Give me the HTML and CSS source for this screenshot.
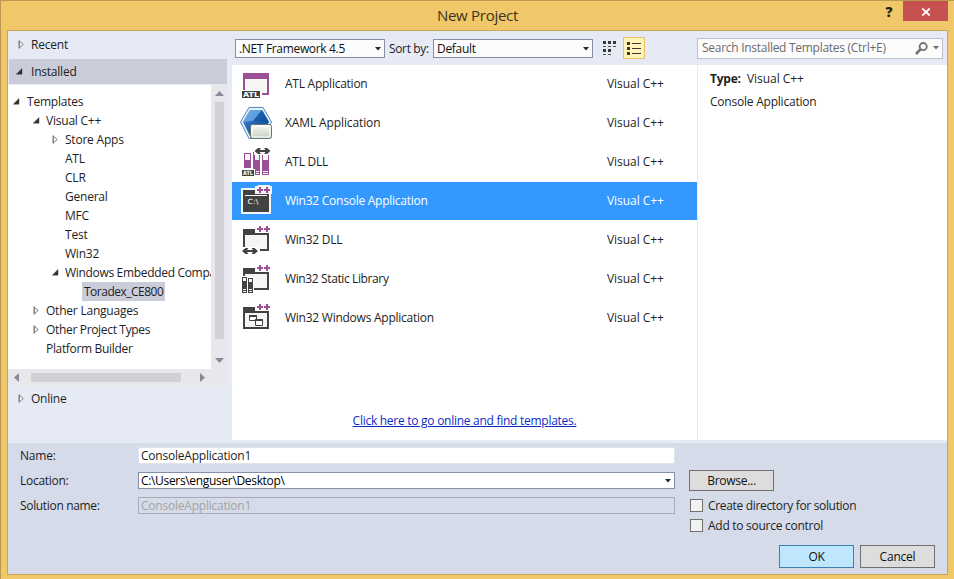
FILE: index.html
```
<!DOCTYPE html>
<html lang="en">
<head>
<meta charset="utf-8">
<title>New Project</title>
<link rel="stylesheet" href="styles.css">
</head>
<body>
<svg class="defs" width="0" height="0">
  <defs>
    <symbol id="closed" viewBox="0 0 7 9"><path d="M1 .8V8.2L5.2 4.5Z" fill="#fff" stroke="#777" stroke-width="1"/><path d="M1.5 0.5v8" stroke="#888"/></symbol>
    <symbol id="open" viewBox="0 0 7 7"><path d="M6 .5V6.200H.3Z" fill="#333" stroke="#333" stroke-width=".4"/></symbol>
    <symbol id="down" viewBox="0 0 6 4"><path d="M0 0H6L3 3.5Z" fill="currentColor"/></symbol>
    <g id="pp" fill="#9b4f96"><path d="M19 5h2v2h2v2h-2v2h-2V9h-2V7h2zM26 5h2v2h2v2h-2v2h-2V9h-2V7h2z"/></g>
    <g id="folder"><path d="M3 8H15V12H29V30H3Z" fill="#424242"/><path d="M5 14H27V28H5Z" fill="#f5f5f5"/></g>
    <path id="arrows" d="M0 3L3.500 0H6.500L5 2H11L9.500 0H12.500L16 3L12.500 6H9.500L11 4H5L6.500 6H3.500Z" fill="#424242"/>
    <linearGradient id="blue" x1="0" y1="0" x2="1" y2="1"><stop offset="0" stop-color="#4b91d9"/><stop offset=".5" stop-color="#1f61b5"/><stop offset="1" stop-color="#0d4187"/></linearGradient>
    <linearGradient id="grey" x1="0" y1="0" x2="0" y2="1"><stop offset="0" stop-color="#fbfcf8"/><stop offset=".5" stop-color="#dfe5da"/><stop offset="1" stop-color="#c5cdbf"/></linearGradient>
  </defs>
</svg>
<div class="window">
  <header class="titlebar">
    <span class="title">New Project</span>
    <div class="caption"><span class="help">?</span><button class="close" aria-label="Close"><svg width="10" height="8" viewBox="0 0 10 8"><path d="M1.300.5L8.700 7.500M8.700.5L1.300 7.500" stroke="#fff" stroke-width="1.800"/></svg></button></div>
  </header>
  <main class="client">
    <div class="upper">
      <nav class="side">
        <div class="group recent"><svg width="7" height="9"><use href="#closed"/></svg><span>Recent</span></div>
        <div class="group installed"><svg width="7" height="7"><use href="#open"/></svg><span>Installed</span></div>
        <div class="treebox">
          <ul class="tree">
            <li class="l0"><svg width="7" height="7"><use href="#open"/></svg><span>Templates</span></li>
            <li class="l1"><svg width="7" height="7"><use href="#open"/></svg><span>Visual C++</span></li>
            <li class="l2"><svg width="7" height="9"><use href="#closed"/></svg><span>Store Apps</span></li>
            <li class="l2"><i></i><span>ATL</span></li>
            <li class="l2"><i></i><span>CLR</span></li>
            <li class="l2"><i></i><span>General</span></li>
            <li class="l2"><i></i><span>MFC</span></li>
            <li class="l2"><i></i><span>Test</span></li>
            <li class="l2"><i></i><span>Win32</span></li>
            <li class="l2"><svg width="7" height="7"><use href="#open"/></svg><span class="embedded">Windows Embedded Compact</span></li>
            <li class="l3"><span class="current">Toradex_CE800</span></li>
            <li class="l1"><svg width="7" height="9"><use href="#closed"/></svg><span>Other Languages</span></li>
            <li class="l1"><svg width="7" height="9"><use href="#closed"/></svg><span class="tight">Other Project Types</span></li>
            <li class="l1"><i></i><span class="tight">Platform Builder</span></li>
          </ul>
          <div class="vscroll"><svg width="9" height="5"><path d="M0 5L4.500 0L9 5Z" fill="#868999"/></svg><div class="vthumb"></div><svg width="9" height="5"><path d="M0 0H9L4.500 5Z" fill="#868999"/></svg></div>
        </div>
        <div class="hscroll"><svg width="5" height="9"><path d="M5 0V9L0 4.500Z" fill="#868999"/></svg><div class="hthumb"></div><svg width="5" height="9"><path d="M0 0V9L5 4.500Z" fill="#868999"/></svg></div>
        <div class="group online"><svg width="7" height="9"><use href="#closed"/></svg><span>Online</span></div>
      </nav>
      <section class="content">
        <div class="toolbar">
          <div class="combo framework"><span>.NET Framework 4.5</span><svg width="6" height="4"><use href="#down"/></svg></div>
          <span class="sortlabel">Sort by:</span>
          <div class="combo sort"><span>Default</span><svg width="6" height="4"><use href="#down"/></svg></div>
          <svg class="grid-icon" width="14" height="14" fill="#383838"><path d="M0 0h3v3H0zM5 0h3v3H5zM10 0h3v3h-3zM0 8h3v3H0zM5 8h3v3H5z"/><path d="M0 5h3v1H0zM5 5h3v1H5zM10 5h3v1h-3zM0 13h3v1H0zM5 13h3v1H5z" opacity=".85"/></svg>
          <div class="listbtn"><svg width="14" height="13" fill="#383838"><path d="M0 0h3v3H0zM0 5h3v3H0zM0 10h3v3H0z"/><path d="M5 1h9v1H5zM5 6h9v1H5zM5 11h9v1H5z"/></svg></div>
          <div class="search"><span>Search Installed Templates (Ctrl+E)</span><svg class="lens" width="13" height="13" fill="none" stroke="#717171"><circle cx="8.200" cy="4.600" r="3.600" stroke-width="1.800"/><path d="M5.600 7.200L1 12" stroke-width="2.600"/></svg><svg class="mini" width="6" height="4"><use href="#down"/></svg></div>
        </div>
        <div class="panes">
          <div class="list">
            <div class="row"><svg width="34" height="38"><path d="M3 8H29V30H3Z" fill="#9b4f96"/><path d="M5 14H27V28H5Z" fill="#f5f5f5"/><path d="M1 25H22V34H1Z" fill="#fff"/><path d="M2 26H20V33H2Z" fill="#424242"/><text x="3" y="32.200" class="badge" textLength="16" lengthAdjust="spacingAndGlyphs">ATL</text></svg><span>ATL Application</span><em>Visual C++</em></div>
            <div class="row"><svg width="34" height="38"><path d="M9 3.500H23L31.500 18L23 34.500H9L.5 18Z" fill="#e6f0fb" stroke="#5485bb"/><path d="M10 6H22L29 18L22 32H10L3 18Z" fill="url(#blue)"/><path d="M10 6H22L13 17L3 18Z" fill="#7db9ef" opacity=".65"/><path d="M22 6L29 18L13 17Z" fill="#11529f" opacity=".6"/><rect x="10.500" y="20.500" width="21" height="14" rx="2" fill="url(#grey)" stroke="#65786f"/><rect x="12" y="22" width="18" height="11" rx="1" fill="none" stroke="#fff"/></svg><span class="xaml">XAML Application</span><em>Visual C++</em></div>
            <div class="row"><svg width="34" height="38"><path d="M4 10H11V25H4ZM13 9H20V32H13ZM22 10H29V32H22Z" fill="#9b4f96"/><path d="M5 11H10V17H5ZM14 12H19V17H14ZM23 12H28V17H23Z" fill="#f5f5f5"/><path d="M16 28H19V29H16ZM16 30H19V31H16ZM23 28H28V29H23ZM23 30H28V31H23Z" fill="#fff"/><path d="M14 3H31V12H14ZM1 26H15V34H1Z" fill="#fff"/><use href="#arrows" x="14.500" y="5"/><path d="M2 27H14V33H2Z" fill="#424242"/><text x="3" y="32" class="badge small" textLength="10" lengthAdjust="spacingAndGlyphs">ATL</text><path d="M14 12H15V17H14Z" fill="#9b4f96"/></svg><span>ATL DLL</span><em>Visual C++</em></div>
            <div class="row selected"><svg width="34" height="38"><path d="M1 6H15V4H18V3H30V4H32V12H31V32H1Z" fill="#f5f5f5"/><path d="M3 8H15V12H29V30H3Z" fill="#424242"/><path d="M5 13H27V14H5Z" fill="#f5f5f5"/><use href="#pp"/><text x="7.500" y="22.300" class="prompt" textLength="11" lengthAdjust="spacingAndGlyphs">C:\</text></svg><span>Win32 Console Application</span><em>Visual C++</em></div>
            <div class="row"><svg width="34" height="38"><use href="#folder"/><path d="M1 26H20V34H1Z" fill="#fff"/><use href="#arrows" x="2" y="27"/><use href="#pp"/></svg><span>Win32 DLL</span><em>Visual C++</em></div>
            <div class="row"><svg width="34" height="38"><use href="#folder"/><path d="M1 16H7V17H14V34H1Z" fill="#fff"/><path d="M2 17H7V33H2ZM8 18H13V33H8Z" fill="#424242"/><path d="M3 18H6V21H3ZM9 19H12V22H9ZM3 29H6V30H3ZM3 31H6V32H3ZM9 29H12V30H9ZM9 31H12V32H9Z" fill="#f5f5f5"/><use href="#pp"/></svg><span class="static">Win32 Static Library</span><em>Visual C++</em></div>
            <div class="row"><svg width="34" height="38"><use href="#folder"/><path d="M9.500 16.500H16.500V21.500H9.500Z" fill="#fff" stroke="#424242"/><path d="M9 16H17V18H9Z" fill="#424242"/><path d="M15.500 20.500H22.500V26.500H15.500Z" fill="#fff" stroke="#424242"/><path d="M15 20H23V22H15Z" fill="#424242"/><use href="#pp"/></svg><span>Win32 Windows Application</span><em>Visual C++</em></div>
            <a class="onlinelink">Click here to go online and find templates.</a>
          </div>
          <aside class="detail">
            <p class="type"><b>Type:</b><span>Visual C++</span></p>
            <p>Console Application</p>
          </aside>
        </div>
      </section>
    </div>
    <footer class="form">
      <div class="fields">
        <label class="f-name">Name:</label><div class="box name">ConsoleApplication1</div>
        <label class="f-loc">Location:</label><div class="box location"><span>C:\Users\enguser\Desktop\</span><svg width="6" height="4"><use href="#down"/></svg></div>
        <label class="f-sol">Solution name:</label><div class="box solution">ConsoleApplication1</div>
      </div>
      <div class="actions">
        <button class="btn browse">Browse...</button>
        <div class="check"><i></i><span class="c-create">Create directory for solution</span></div>
        <div class="check"><i></i><span class="c-add">Add to source control</span></div>
        <div class="confirm"><button class="btn ok">OK</button><button class="btn cancel">Cancel</button></div>
      </div>
    </footer>
  </main>
</div>
</body>
</html>
```
FILE: styles.css
```
* { box-sizing: border-box; }
body { margin: 0; font: 12px/19px "Open Sans", "Noto Sans", sans-serif; letter-spacing: -0.22px; color: #1e1e1e; }
.defs { position: absolute; }
svg { display: block; flex: none; }
button { font: inherit; letter-spacing: inherit; padding: 0; }
span, em, label, a { white-space: nowrap; }
.window { width: 954px; height: 579px; background: #f0c869; border: 1px solid #b9994f; border-right: 0; border-bottom: 0; padding: 0 6px 0; }
.titlebar { height: 29px; display: grid; grid-template-columns: 1fr; position: relative; }
.title { font-size: 15px; letter-spacing: -.28px; text-align: center; line-height: 28px; color: #3b3322; }
.caption { position: absolute; right: 0; top: 0; display: flex; }
.help { font-size: 14px; font-weight: 800; width: 28px; text-align: center; line-height: 21px; color: #222; }
.close { width: 45px; height: 20px; border: 0; background: #c75050; display: grid; place-items: center; padding-top: 2px; }
.client { width: 941px; height: 545px; border: 1px solid #c8a654; display: flex; flex-direction: column; }
.upper { height: 412px; background: #e6eaf5; display: flex; }
.side { width: 220px; display: flex; flex-direction: column; }
.group { display: flex; align-items: center; padding-left: 10px; }
.group svg { margin-right: 6px; }
.recent { height: 28px; padding-bottom: 2px; }
.installed { height: 25px; background: #cbccda; margin: 0 1px 1px; padding-left: 7px; }
.installed svg { margin-right: 8px; }
.online { height: 26px; padding-bottom: 2px; }
.treebox { height: 284px; display: flex; }
.tree { list-style: none; margin: 0; padding: 7px 0 0; width: 203px; background: #fff; overflow: hidden; }
.tree li { height: 19px; display: flex; align-items: center; }
.tree svg, .tree i { width: 7px; margin-right: 6px; flex: none; }
.tree .l0 { padding-left: 5px; }
.tree .l0 svg { margin-right: 7px; }
.l1 { padding-left: 25px; }
.l2 { padding-left: 44px; }
.l3 { padding-left: 74px; }
.tight { letter-spacing: -.33px; }
.embedded { letter-spacing: -.32px; }
.current { background: #cbccda; padding: 0 2px; width: 83px; letter-spacing: -.5px; }
.vscroll { width: 17px; background: #e8e8ec; padding: 6px 4px; display: flex; flex-direction: column; align-items: center; justify-content: space-between; }
.vthumb { width: 9px; height: 237px; background: #d0d1d7; margin-bottom: 14px; }
.hscroll { height: 17px; background: #e8e8ec; display: flex; align-items: center; padding-left: 6px; }
.hthumb { width: 150px; height: 9px; background: #d0d1d7; margin: 0 19px 0 12px; }
.content { flex: 1; padding-left: 4px; }
.toolbar { height: 34px; display: flex; align-items: center; padding-left: 3px; }
.combo { height: 19px; background: #fcfcfc; border: 1px solid #868fa8; display: flex; justify-content: space-between; align-items: center; padding: 0 3px 0 3px; color: #111; letter-spacing: -.33px; }
.combo svg { margin-top: 2px; }
.combo svg, .location svg { color: #1b293e; }
.framework { width: 150px; }
.sortlabel { width: 44px; margin-left: 4px; letter-spacing: -.35px; }
.sort { width: 160px; letter-spacing: -.3px; }
.grid-icon { margin-left: 10px; margin-top: 0; }
.listbtn { width: 22px; height: 22px; border: 1px solid #e5c365; background: #fff3ba; margin-left: 6px; display: grid; place-items: center; }
.search { width: 246px; height: 21px; margin-left: 52px; background: #fcfcfc; border: 1px solid #bac0ce; color: #6b6b6b; display: flex; align-items: center; padding-left: 4px; letter-spacing: -.28px; }
.search span { margin-top: -1px; }
.lens { margin-left: auto; margin-right: 5px; }
.mini { margin-right: 3px; color: #717171; }
.panes { display: flex; height: 375px; }
.list { width: 465px; background: #fff; display: flex; flex-direction: column; }
.row { height: 38px; margin-bottom: 1px; display: flex; align-items: center; padding-left: 8px; }
.row span { margin: -2px 0 0 11px; width: 322px; letter-spacing: -.25px; }
.row .xaml { letter-spacing: -.12px; }
.row .static { letter-spacing: -.38px; }
.row em { font-style: normal; letter-spacing: -.05px; margin-top: -2px; }
.row.selected { background: #3399ff; color: #fff; }
.badge { font: bold 7px "DejaVu Sans", sans-serif; fill: #fff; letter-spacing: 0; }
.small { font-size: 6px; }
.prompt { font: 7px "DejaVu Sans", sans-serif; fill: #fff; letter-spacing: 0; }
.onlinelink { color: #0c2cc8; text-decoration: underline; align-self: center; margin-top: 73px; letter-spacing: -.27px; }
.detail { flex: 1; background: #fff; border-left: 1px solid #e6eaf5; padding: 4px 0 0 12px; }
.detail p { margin: 0 0 4px; }
.type b { display: inline-block; width: 37px; }
.type span { letter-spacing: -.05px; }
.form { flex: 1; background: #d6dbe9; display: flex; }
.fields { width: 667px; display: grid; grid-template-columns: 118px 537px; grid-template-rows: 25px 25px 25px; align-items: center; align-content: start; padding: 0 0 0 12px; }
.f-sol { letter-spacing: -.33px; }
.f-loc { letter-spacing: -.28px; }
.box { height: 17px; padding: 0 3px; line-height: 17px; }
.name { background: #fff; border: 1px solid #e0e3ec; height: 17px; line-height: 15px; padding: 0 2px; }
.location { background: #fff; border: 1px solid #868fa8; display: flex; justify-content: space-between; align-items: center; padding: 0 3px 0 2px; color: #000; letter-spacing: -.33px; }
.solution { border: 1px solid #a5abb9; color: #a2a4a5; line-height: 15px; padding: 0 2px; }
.actions { flex: 1; padding: 27px 0 0 14px; }
.btn { border: 1px solid #707070; background: #ddd; color: #111; display: block; }
.browse { width: 85px; height: 21px; margin-bottom: 4px; letter-spacing: -.28px; }
.check { display: flex; align-items: center; height: 20px; padding-left: 1px; }
.check i { width: 13px; height: 13px; border: 1px solid #707070; background: #f1f2f2; margin: 1px 5px 0 0; }
.c-create { letter-spacing: -.33px; }
.c-add { letter-spacing: -.27px; }
.confirm { display: flex; gap: 6px; margin: 10px 0 0 90px; }
.confirm .btn { width: 75px; height: 23px; }
.confirm .ok { background: #bee6fd; border-color: #3c7fb1; }
```
